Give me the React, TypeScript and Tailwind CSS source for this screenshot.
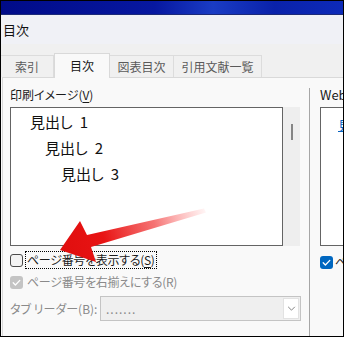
import React from 'react';

const jp = "[font-family:'Noto_Sans_CJK_JP',sans-serif] [font-feature-settings:'palt']";

function CheckMark({ className }: { className?: string }) {
  return (
    <svg viewBox="0 0 13 13" className={className}>
      <path d="M3.2 6.8 L5.4 9 L9.8 4.4" fill="none" stroke="white" strokeWidth="1.3" strokeLinecap="round" strokeLinejoin="round" />
    </svg>
  );
}

function Tab({ label, width, active }: { label: string; width: string; active?: boolean }) {
  if (active) {
    return (
      <div className={`${width} relative z-10 -mb-px h-[25px] flex items-center justify-center bg-[#f9f9f9] border border-b-0 border-[#d9d9d9] text-[12px] text-[#1a1a1a]`}>
        {label}
      </div>
    );
  }
  return (
    <div className={`${width} h-[22px] flex items-center justify-center border-t border-r border-[#dcdcdc] text-[12px] text-[#5a5a5a]`}>
      {label}
    </div>
  );
}

export default function App() {
  return (
    <div className={`relative w-[344px] h-[337px] overflow-hidden border border-black bg-[#f9f9f9] flex flex-col ${jp}`}>
      {/* desktop strip above the dialog */}
      <div className="h-[13px] bg-[linear-gradient(90deg,#000b88,#0718a0_45%,#1a3cc4_62%,#0a22aa_80%,#0d2ab8)]" />
      <div className="h-px bg-[#1c2a78]" />

      {/* title bar */}
      <div className="h-[29px] bg-[#f0f1f6] flex items-center pl-[2px] text-[13px] text-[#111]">目次</div>

      {/* tabs */}
      <div className="h-[33px] bg-[#f0f0f0] flex items-end">
        <Tab label="索引" width="w-[53px]" />
        <Tab label="目次" width="w-[56px]" active />
        <Tab label="図表目次" width="w-[64px]" />
        <Tab label="引用文献一覧" width="w-[88px]" />
      </div>

      {/* panel */}
      <div className="flex-1 flex ml-px border-t border-l border-[#d9d9d9] bg-[#f9f9f9]">
        <div className="w-[306px] shrink-0 pl-[7px] pt-[9px] flex flex-col">
          <div className="h-[16px] leading-[16px] text-[12px] text-[#1a1a1a]">
            印刷イメージ(<span className="underline underline-offset-2">V</span>)
          </div>
          <div className="mt-[4px] flex h-[139px]">
            <div className="w-[273px] border border-[#646464] bg-white pt-px text-[15px] leading-[26px] text-[#111]">
              <div className="ml-[19px]">見出し<span className="ml-[7px]">1</span></div>
              <div className="ml-[34px]">見出し<span className="ml-[7px]">2</span></div>
              <div className="ml-[50px]">見出し<span className="ml-[7px]">3</span></div>
            </div>
            <div className="w-[17px] bg-[#eeeeee] flex justify-center pt-[17px]">
              <div className="w-[2px] h-[16px] bg-[#858585]" />
            </div>
          </div>

          <div className="mt-[4px] h-[20px] flex items-center">
            <div className="w-[13px] h-[13px] rounded-[3px] border border-[#4a4a4a] bg-[#f3f3f3]" />
            <div className="ml-[2px] h-[18px] flex items-center px-px border border-dotted border-black text-[12px] tracking-[-0.3px] text-[#1a1a1a]">
              ページ番号を表示する(<span className="underline underline-offset-2">S</span>)
            </div>
          </div>

          <div className="mt-[2px] h-[20px] flex items-center">
            <div className="w-[13px] h-[13px] rounded-[3px] bg-[#c4c4c4] flex items-center justify-center">
              <CheckMark className="w-[13px] h-[13px]" />
            </div>
            <div className="ml-[4px] text-[12px] tracking-[-0.3px] text-[#8a8a8a]">ページ番号を右揃えにする(R)</div>
          </div>

          <div className="mt-[4px] flex items-center">
            <div className="w-[90px] text-[12px] text-[#8a8a8a]">タブ リーダー(B):</div>
            <div className="w-[201px] h-[25px] border border-[#c4c4c4] bg-[#efefef] flex items-center">
              <span className="pl-[5px] text-[12px] leading-none text-[#8a8a8a] tracking-[1px]">.......</span>
              <div className="ml-auto mr-px w-[16px] h-[21px] bg-white border border-[#e2e2e2] flex items-center justify-center">
                <svg viewBox="0 0 10 6" className="w-[9px] h-[5px]">
                  <path d="M1 1 L5 5 L9 1" fill="none" stroke="#6a6a6a" strokeWidth="1" />
                </svg>
              </div>
            </div>
          </div>
        </div>

        <div className="w-px shrink-0 bg-[#a6a6a6] mt-[10px]" />

        <div className="flex-1 min-w-0 pl-[10px] pt-[9px] flex flex-col">
          <div className="h-[16px] leading-[16px] text-[13px] text-[#1a1a1a] whitespace-nowrap">Web プレビュー(W)</div>
          <div className="mt-[4px] h-[139px] w-[60px] border border-r-0 border-[#646464] bg-white pl-[17px] pt-[3px]">
            <span className="text-[13px] text-[#0563c1] underline whitespace-nowrap">見出し 1</span>
          </div>
          <div className="mt-[6px] h-[20px] flex items-center whitespace-nowrap">
            <div className="w-[13px] h-[13px] rounded-[3px] bg-[#0067c0] flex items-center justify-center shrink-0">
              <CheckMark className="w-[13px] h-[13px]" />
            </div>
            <span className="ml-[2px] text-[12px] text-[#1a1a1a]">ページ番号の代わりにハイパーリンクを使う</span>
          </div>
        </div>
      </div>

      {/* red arrow annotation */}
      <svg className="absolute -left-px -top-px w-[344px] h-[337px] pointer-events-none" viewBox="0 0 344 337">
        <defs>
          <linearGradient id="arrowFade" gradientUnits="userSpaceOnUse" x1="206" y1="210" x2="60" y2="250">
            <stop offset="0" stopColor="#ff5a5a" stopOpacity="0.05" />
            <stop offset="0.35" stopColor="#f02a2a" stopOpacity="0.65" />
            <stop offset="0.7" stopColor="#e81414" stopOpacity="1" />
            <stop offset="1" stopColor="#e00e0e" stopOpacity="1" />
          </linearGradient>
        </defs>
        <polygon
          points="60,250 80,221 87,235 204,208.5 206,212.5 91,247 96,262"
          fill="url(#arrowFade)"
        />
      </svg>
    </div>
  );
}
